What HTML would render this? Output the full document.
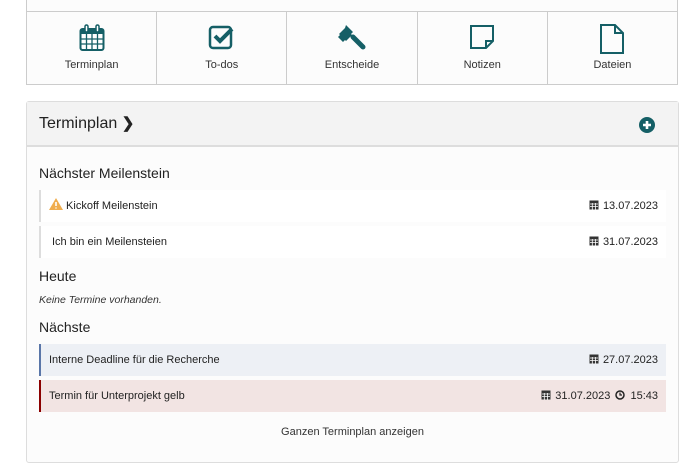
<!DOCTYPE html>
<html><head><meta charset="utf-8"><style>
*{box-sizing:border-box;margin:0;padding:0}
body{width:693px;height:474px;background:#fff;font-family:"Liberation Sans",sans-serif;color:#222;position:relative;overflow:hidden}
.top{position:absolute;left:26px;top:-2px;width:652px;height:87px;border:1px solid #ccc;background:#fcfcfc}
.row{position:absolute;left:26px;top:11px;width:652px;height:74px;border:1px solid #ccc;display:flex;background:#fcfcfc}
.cell{flex:1;border-right:1px solid #ccc;text-align:center;font-size:11px;color:#333;position:relative}
.cell:last-child{border-right:none}
.cell svg{position:absolute;left:50%;transform:translateX(-50%);top:12px}
.cell span{position:absolute;left:0;right:0;top:47px}
.panel{position:absolute;left:26px;top:101px;width:653px;height:362px;border:1px solid #ddd;border-radius:3px;background:#fcfcfc}
.hdr{height:45px;background:#f3f3f3;border-bottom:2px solid #ddd;position:relative}
.hdr h2{position:absolute;left:12px;top:12px;font-size:16px;font-weight:normal;color:#222}
h3{position:absolute;left:12px;font-size:14px;font-weight:normal;color:#222}
.it{position:absolute;left:12px;width:627px;height:32px;background:#fff;border-left:2px solid #ddd;font-size:11px;line-height:32px;padding-left:10px}
.it .r{position:absolute;right:8px;top:0}
.cal{display:inline-block;vertical-align:-1px;margin-right:4px}
</style></head><body>
<div class="top"></div>
<div class="row">
<div class="cell"><svg width="26" height="28" viewBox="0 0 26 28"><rect x="1.5" y="5" width="23" height="21" rx="2" fill="#fff" stroke="#155f66" stroke-width="2"/><rect x="1.5" y="5" width="23" height="5" fill="#155f66"/><rect x="6" y="1" width="3" height="7" rx="1.5" fill="#fff" stroke="#155f66" stroke-width="1.5"/><rect x="17" y="1" width="3" height="7" rx="1.5" fill="#fff" stroke="#155f66" stroke-width="1.5"/><path d="M2 15h22M2 20h22M7.5 10v16M13 10v16M18.5 10v16" stroke="#155f66" stroke-width="1.3"/></svg><span>Terminplan</span></div>
<div class="cell"><svg width="28" height="26" viewBox="0 0 28 26"><rect x="2" y="3" width="21" height="21" rx="3" fill="none" stroke="#155f66" stroke-width="2.5"/><path d="M7 12l5 5 12-12" fill="none" stroke="#155f66" stroke-width="4"/></svg><span>To-dos</span></div>
<div class="cell"><svg width="28" height="28" viewBox="0 0 28 28"><path d="M8 1l7 7-2 2 1 1-6 6-1-1-2 2-5-5 2-2-1-1 6-6z" fill="#155f66"/><path d="M15 13l10 10" stroke="#155f66" stroke-width="5" stroke-linecap="round"/></svg><span>Entscheide</span></div>
<div class="cell"><svg width="26" height="26" viewBox="0 0 26 26"><path d="M2 2h22v15l-7 7H2z" fill="none" stroke="#155f66" stroke-width="2"/><path d="M17 24v-7h7" fill="none" stroke="#155f66" stroke-width="2"/></svg><span>Notizen</span></div>
<div class="cell"><svg width="26" height="30" viewBox="0 0 26 30"><path d="M2 1h14l8 8v20H2z" fill="none" stroke="#155f66" stroke-width="2"/><path d="M16 1v8h8" fill="none" stroke="#155f66" stroke-width="2"/></svg><span>Dateien</span></div>
</div>
<div class="panel">
<div class="hdr"><h2>Terminplan <b style="font-size:15px">&#x276F;</b></h2>
<svg style="position:absolute;left:612px;top:15px" width="16" height="16" viewBox="0 0 16 16"><circle cx="8" cy="8" r="8" fill="#155f66"/><path d="M8 4v8M4 8h8" stroke="#fff" stroke-width="2.6"/></svg></div>
<h3 style="top:63px">Nächster Meilenstein</h3>
<div class="it" style="top:88px;padding-left:8px"><svg width="14" height="12" viewBox="0 0 14 12" style="vertical-align:-1px"><path d="M7 0l7 12H0z" fill="#f0ad4e"/><path d="M7 4v4M7 9.5v1" stroke="#fff" stroke-width="1.6"/></svg> Kickoff Meilenstein<span class="r"><svg class="cal" width="10" height="11" viewBox="0 0 10 11"><rect x="0.5" y="1.5" width="9" height="9" fill="#333"/><path d="M1 5h8M1 7.5h8M3.3 4v7M6.6 4v7" stroke="#fff" stroke-width=".8"/></svg>13.07.2023</span></div>
<div class="it" style="top:124px;padding-left:11px">Ich bin ein Meilensteien<span class="r"><svg class="cal" width="10" height="11" viewBox="0 0 10 11"><rect x="0.5" y="1.5" width="9" height="9" fill="#333"/><path d="M1 5h8M1 7.5h8M3.3 4v7M6.6 4v7" stroke="#fff" stroke-width=".8"/></svg>31.07.2023</span></div>
<h3 style="top:166px">Heute</h3>
<div style="position:absolute;left:12px;top:192px;font-size:10.5px;font-style:italic;color:#333">Keine Termine vorhanden.</div>
<h3 style="top:217px">Nächste</h3>
<div class="it" style="top:242px;background:#edf0f5;border-left-color:#5a76a8;padding-left:8px">Interne Deadline für die Recherche<span class="r"><svg class="cal" width="10" height="11" viewBox="0 0 10 11"><rect x="0.5" y="1.5" width="9" height="9" fill="#333"/><path d="M1 5h8M1 7.5h8M3.3 4v7M6.6 4v7" stroke="#fff" stroke-width=".8"/></svg>27.07.2023</span></div>
<div class="it" style="top:278px;background:#f2e4e3;border-left-color:#8b0000;padding-left:8px">Termin für Unterprojekt gelb<span class="r"><svg class="cal" width="10" height="11" viewBox="0 0 10 11"><rect x="0.5" y="1.5" width="9" height="9" fill="#333"/><path d="M1 5h8M1 7.5h8M3.3 4v7M6.6 4v7" stroke="#fff" stroke-width=".8"/></svg>31.07.2023 <svg width="10" height="10" viewBox="0 0 10 10" style="vertical-align:-1px;margin:0 2px"><circle cx="5" cy="5" r="4" fill="none" stroke="#222" stroke-width="1.5"/><path d="M5 2.5V5h2" fill="none" stroke="#222" stroke-width="1.2"/></svg> 15:43</span></div>
<div style="position:absolute;left:0;right:0;top:324px;text-align:center;font-size:11px;color:#333">Ganzen Terminplan anzeigen</div>
</div>
</body></html>
